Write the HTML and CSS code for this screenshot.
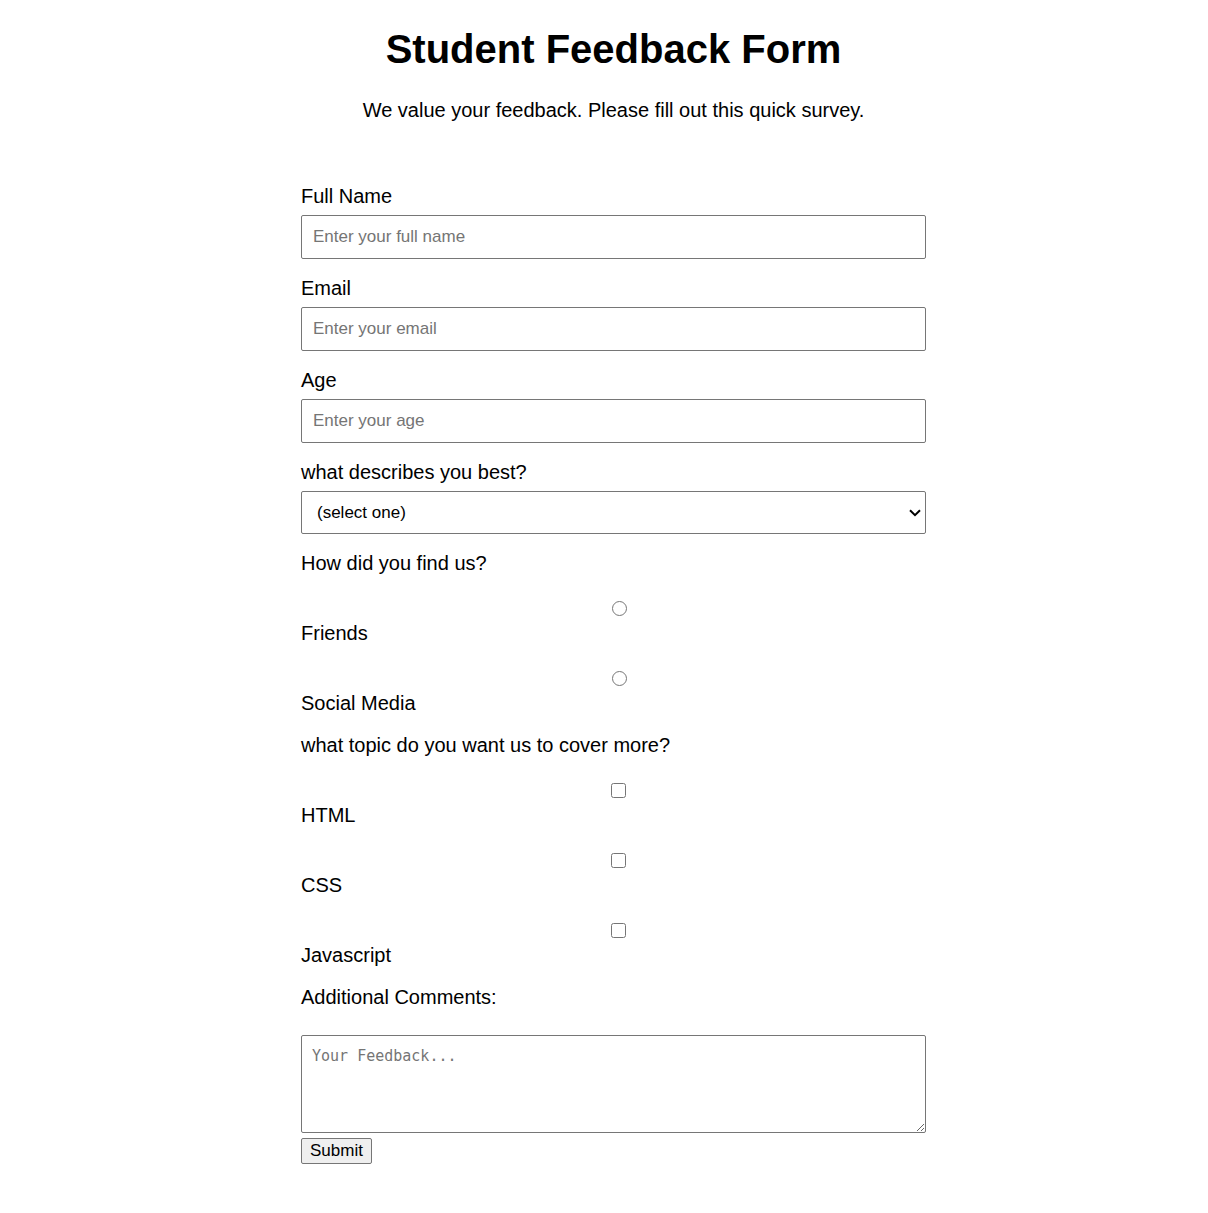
FILE: index.html
```html
<!DOCTYPE html>
<html lang="en">
<head>
<meta charset="utf-8">
<meta name="viewport" content="width=device-width, initial-scale=1">
<title>Student Feedback Form</title>
<link rel="stylesheet" href="styles.css">
</head>
<body>
<header class="intro">
  <h1 class="title">Student Feedback Form</h1>
  <p class="lead">We value your feedback. Please fill out this quick survey.</p>
</header>
<form class="survey">
  <div class="field">
    <label for="name">Full Name</label>
    <input class="control" id="name" type="text" placeholder="Enter your full name">
  </div>
  <div class="field">
    <label for="email">Email</label>
    <input class="control" id="email" type="email" placeholder="Enter your email">
  </div>
  <div class="field">
    <label for="age">Age</label>
    <input class="control" id="age" type="number" placeholder="Enter your age">
  </div>
  <div class="field">
    <label for="role">what describes you best?</label>
    <div class="picker">
      <select class="control dropdown" id="role">
        <option>(select one)</option>
        <option>Student</option>
        <option>Teacher</option>
      </select>
      <svg class="chevron" width="12" height="8" viewBox="0 0 12 8" aria-hidden="true"><path d="M1 1.2 6 6.2 11 1.2" fill="none" stroke="#000" stroke-width="2"/></svg>
    </div>
  </div>
  <fieldset class="group">
    <legend>How did you find us?</legend>
    <label class="choice"><input type="radio" name="source" value="friends">Friends</label>
    <label class="choice"><input type="radio" name="source" value="social">Social Media</label>
  </fieldset>
  <fieldset class="group">
    <legend>what topic do you want us to cover more?</legend>
    <label class="choice"><input type="checkbox" name="topic" value="html">HTML</label>
    <label class="choice"><input type="checkbox" name="topic" value="css">CSS</label>
    <label class="choice"><input type="checkbox" name="topic" value="js">Javascript</label>
  </fieldset>
  <div class="comments">
    <label for="comments">Additional Comments:</label>
    <textarea class="control message" id="comments" placeholder="Your Feedback..."></textarea>
  </div>
  <button class="submit" type="submit">Submit</button>
</form>
</body>
</html>
```

FILE: styles.css
```css
* {
  box-sizing: border-box;
}

body {
  margin: 0;
  padding: 26px 0 50px 19px;
  background: #fff;
  color: #000;
  font: 20px/23px "Liberation Sans", Arial, sans-serif;
}

.intro {
  text-align: center;
}

.title {
  margin: 0 0 27px;
  font-size: 40px;
  line-height: 46px;
}

.lead {
  margin: 0;
}

.survey {
  width: 625px;
  max-width: 100%;
  margin: 63px auto 0;
}

.field {
  display: flex;
  flex-direction: column;
  gap: 7px;
  margin-bottom: 18px;
}

.control {
  width: 100%;
  height: 44px;
  padding: 10px 11px;
  border: 1px solid #767676;
  border-radius: 2px;
  background: #fff;
  color: #000;
  font: 17px/20px "Liberation Sans", Arial, sans-serif;
}

.picker {
  display: grid;
  align-items: center;
}

.dropdown {
  grid-area: 1 / 1;
  height: 43px;
  padding: 10px 15px;
  appearance: none;
}

.chevron {
  grid-area: 1 / 1;
  justify-self: end;
  margin-right: 5px;
  pointer-events: none;
}

.group {
  margin: 0 0 19px;
  padding: 0;
  border: 0;
}

.group legend {
  padding: 0;
}

.choice {
  display: flex;
  flex-direction: column;
  margin-top: 26px;
  gap: 6px;
}

.choice input {
  align-self: center;
  width: 15px;
  height: 15px;
  margin: 0 0 0 10px;
}

.choice input[type="radio"] {
  margin-left: 12px;
}

.comments {
  display: flex;
  flex-direction: column;
  gap: 26px;
}

.message {
  height: 98px;
  padding: 10px;
  font: 15px/20px "DejaVu Sans Mono", monospace;
  resize: both;
}

.submit {
  display: block;
  height: 26px;
  margin-top: 5px;
  padding: 0 8px;
  border: 1px solid #767676;
  border-radius: 2px;
  background: #efefef;
  color: #000;
  font: 17px/20px "Liberation Sans", Arial, sans-serif;
}
```
